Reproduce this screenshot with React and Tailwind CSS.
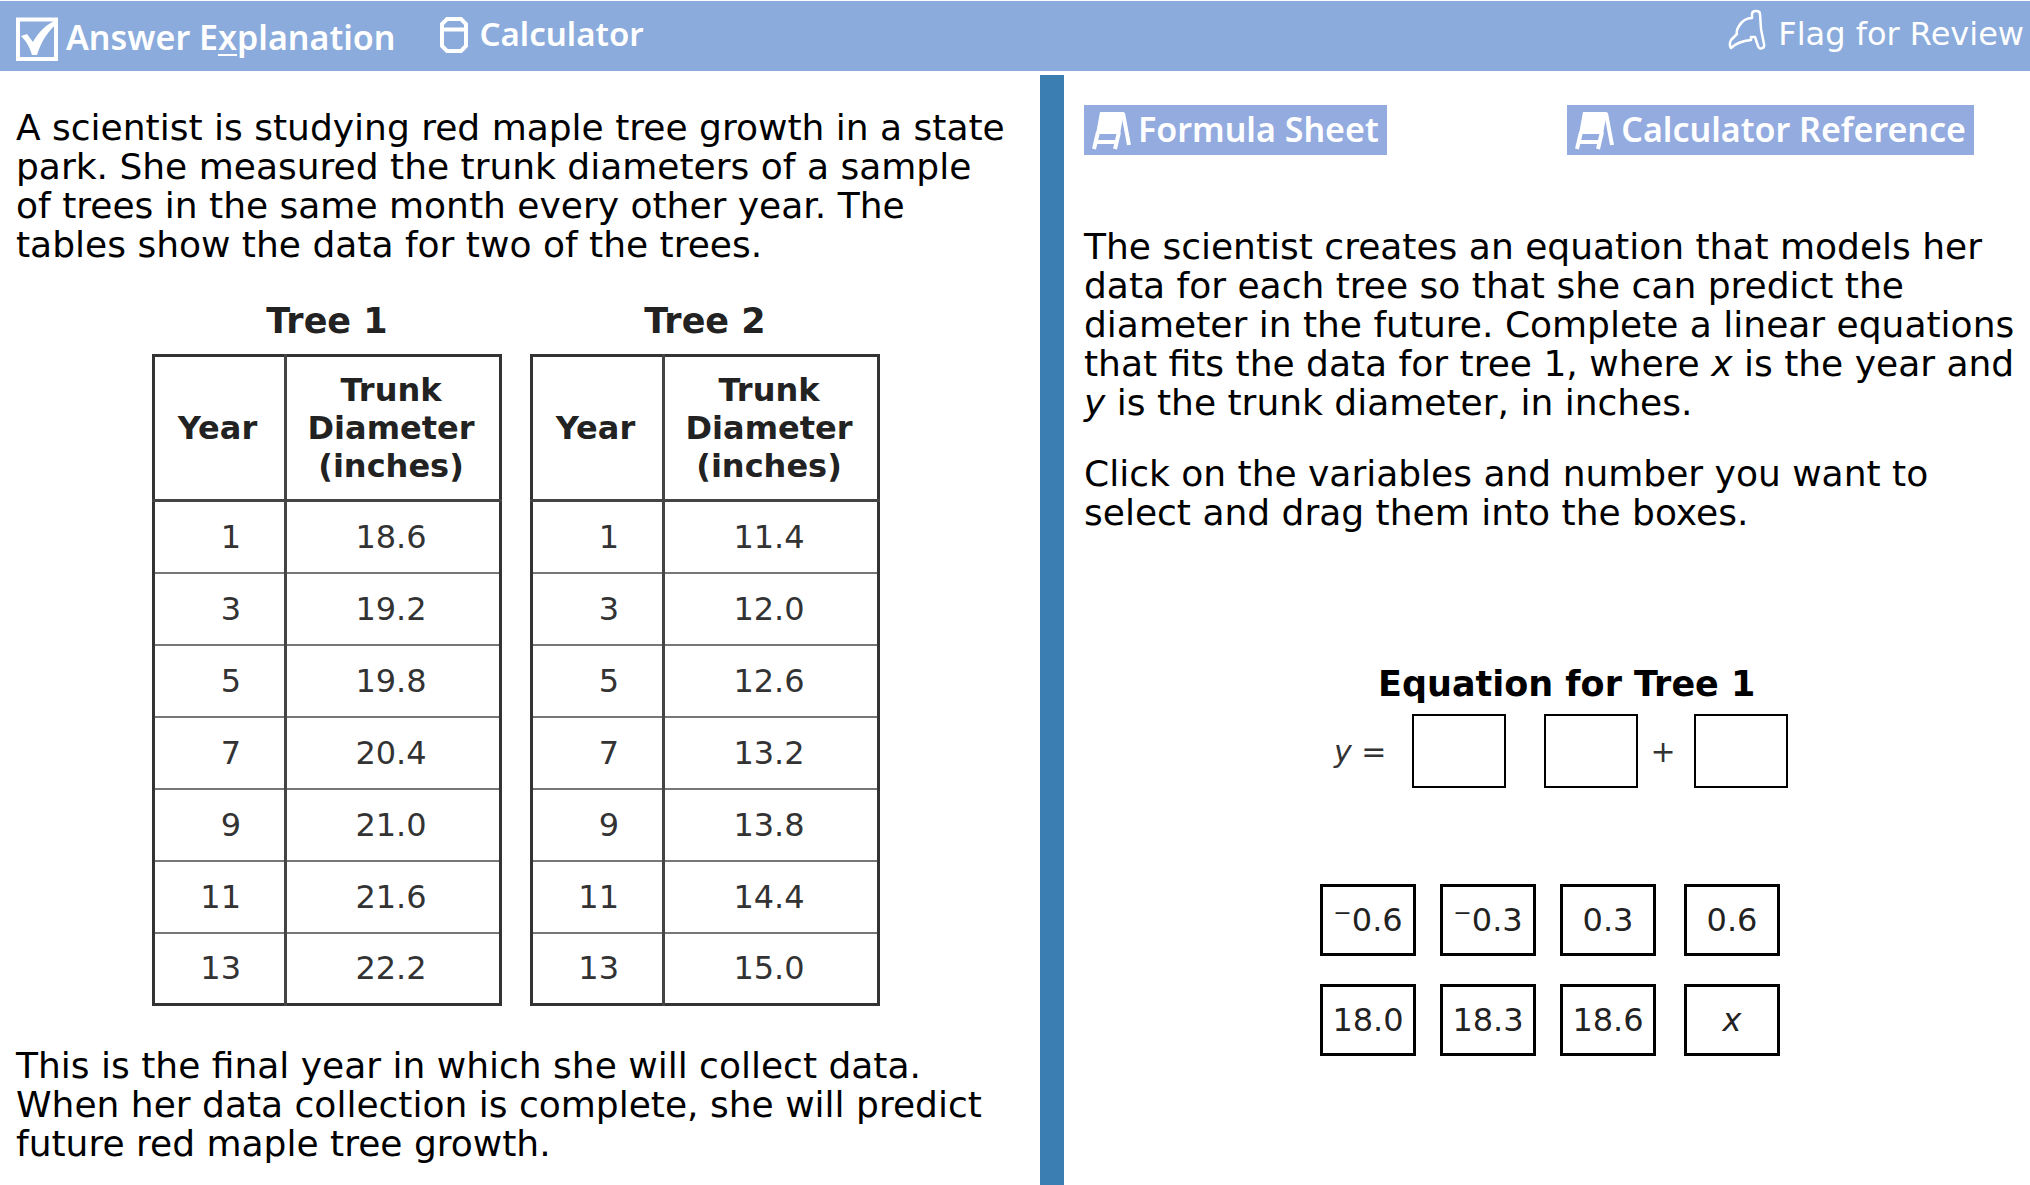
const tree1 = [
    [1, '18.6'],
    [3, '19.2'],
    [5, '19.8'],
    [7, '20.4'],
    [9, '21.0'],
    [11, '21.6'],
    [13, '22.2'],
];

const tree2 = [
    [1, '11.4'],
    [3, '12.0'],
    [5, '12.6'],
    [7, '13.2'],
    [9, '13.8'],
    [11, '14.4'],
    [13, '15.0'],
];

function CheckIcon() {
    return (
        <svg viewBox="0 0 42 44" className="h-11 w-[42px] shrink-0" fill="none" aria-hidden="true">
            <path d="M2 2.500H40V42H2Z" stroke="white" strokeWidth="4" />
            <path d="M5 19L11 17L17 25C23 14 31 7 42 2L43 5C34 12 26 22 21 38H16C14 31 11 25 5 19Z" fill="white" />
        </svg>
    );
}

function CalculatorIcon() {
    return (
        <svg viewBox="0 0 28 36" className="h-9 w-7 shrink-0" fill="none" stroke="white" strokeWidth="4" aria-hidden="true">
            <path d="M7 2H21L26 7V29L21 34H7L2 29V7Z" />
            <path d="M2 12.500H26" />
        </svg>
    );
}

function FlagIcon() {
    return (
        <svg viewBox="0 0 38 42" className="h-[42px] w-[38px] shrink-0" fill="none" stroke="white" strokeWidth="2.500" strokeLinejoin="round" aria-hidden="true">
            <path d="M24 9V5C24 1 32 1 32 5L33 20L36 35C37 40 31 41 30 37L27 28H23V31C14 32 8 34 3 39C1 36 2 33 3 31L9 25C8 22 9 20 11 17C14 12 19 9 24 9Z" />
        </svg>
    );
}

function BookIcon() {
    return (
        <svg viewBox="0 0 40 40" className="h-10 w-10 shrink-0" fill="none" stroke="white" aria-hidden="true">
            <path d="M8 2H32L28 24H4Z" fill="white" stroke="none" />
            <path d="M6 22L2 39M27 22L23 39M4 32H25" strokeWidth="4" />
            <path d="M31 3L37 35" strokeWidth="4" />
        </svg>
    );
}

function TreeTable({ title, rows }) {
    return (
        <table className="w-[350px] table-fixed border-collapse border-3 border-[#333] text-[32px] leading-[38px] text-[#333]">
            <caption className="pt-px pb-[14px] text-[35px] leading-[38px] font-bold text-[#222]">{title}</caption>
            <thead>
                <tr className="h-[145px] text-[32px] text-[#222]">
                    <th scope="col" className="w-[132px] border-r-3 border-b-3 border-[#444] pr-1">
                        Year
                    </th>
                    <th scope="col" className="border-b-3 border-[#444] pr-1">
                        Trunk
                        <br />
                        Diameter
                        <br />
                        (inches)
                    </th>
                </tr>
            </thead>
            <tbody>
                {rows.map(([year, diameter]) => (
                    <tr key={year} className="h-[72px] border-b-2 border-[#777] last:border-b-3 last:border-[#333]">
                        <td className="border-r-3 border-r-[#444] pr-[43px] text-right">{year}</td>
                        <td className="pr-1 text-center">{diameter}</td>
                    </tr>
                ))}
            </tbody>
        </table>
    );
}

function SheetButton({ children }) {
    return (
        <button
            type="button"
            className="flex h-[50px] items-center gap-[6px] bg-[#93abdf] px-2 font-['Noto_Sans',sans-serif] text-[34px] leading-[46px] font-semibold whitespace-nowrap text-white"
        >
            <BookIcon />
            <span className="pb-[2px]">{children}</span>
        </button>
    );
}

function DropBox({ label }) {
    return <button type="button" aria-label={label} className="h-[74px] w-[94px] shrink-0 border-2 border-black bg-white" />;
}

function Tile({ children }) {
    return (
        <button type="button" draggable="true" className="h-[72px] w-24 border-3 border-black bg-white text-[32px] whitespace-nowrap text-[#222]">
            {children}
        </button>
    );
}

function App() {
    return (
        <div className="flex min-h-screen flex-col bg-white pt-px font-['DejaVu_Sans',sans-serif] text-[36px] leading-[39px] text-black">
            {/* Toolbar */}
            <header className="flex h-[70px] items-start justify-between bg-[#8aabdc] pr-[6px] pl-4 text-white">
                <div className="flex items-start gap-11 pt-4 font-['Noto_Sans',sans-serif] font-semibold">
                    <button type="button" className="flex h-11 items-center gap-2 text-[34px]">
                        <CheckIcon />
                        <span className="pb-1">
                            Answer E<span className="underline decoration-2 underline-offset-4">x</span>planation
                        </span>
                    </button>
                    <button type="button" className="flex h-9 items-center gap-3 text-[33px]">
                        <CalculatorIcon />
                        <span className="pb-1">Calculator</span>
                    </button>
                </div>
                <button type="button" className="flex items-start gap-3 pt-2 text-[32px] leading-[50px]">
                    <FlagIcon />
                    Flag for Review
                </button>
            </header>

            <main className="mt-1 flex grow">
                {/* Left side - question data */}
                <section className="w-[1040px] shrink-0 pt-[33px] pl-4">
                    <p>
                        A scientist is studying red maple tree growth in a state
                        <br />
                        park. She measured the trunk diameters of a sample
                        <br />
                        of trees in the same month every other year. The
                        <br />
                        tables show the data for two of the trees.
                    </p>
                    <div className="mt-[37px] ml-[136px] flex gap-7">
                        <TreeTable title="Tree 1" rows={tree1} />
                        <TreeTable title="Tree 2" rows={tree2} />
                    </div>
                    <p className="mt-10">
                        This is the final year in which she will collect data.
                        <br />
                        When her data collection is complete, she will predict
                        <br />
                        future red maple tree growth.
                    </p>
                </section>

                <div className="w-6 shrink-0 bg-[#3b7eb1]" />

                {/* Right side - equation builder */}
                <section className="grow pt-[30px] pl-5">
                    <div className="flex justify-between pr-14">
                        <SheetButton>Formula Sheet</SheetButton>
                        <SheetButton>Calculator Reference</SheetButton>
                    </div>
                    <p className="mt-[72px] whitespace-nowrap">
                        The scientist creates an equation that models her
                        <br />
                        data for each tree so that she can predict the
                        <br />
                        diameter in the future. Complete a linear equations
                        <br />
                        that fits the data for tree 1, where <i>x</i> is the year and
                        <br />
                        <i>y</i> is the trunk diameter, in inches.
                    </p>
                    <p className="mt-8">
                        Click on the variables and number you want to
                        <br />
                        select and drag them into the boxes.
                    </p>

                    <div className="mt-[133px] ml-[236px] w-[468px]">
                        <h2 className="pl-[58px] text-[35px] font-bold whitespace-nowrap">Equation for Tree 1</h2>
                        <div className="mt-[10px] flex items-center pl-[14px] text-[30px] text-[#333]">
                            <span className="w-[78px] shrink-0 whitespace-nowrap">
                                <i>y</i> =
                            </span>
                            <DropBox label="First factor" />
                            <span className="w-[38px] shrink-0" />
                            <DropBox label="Second factor" />
                            <span className="w-14 shrink-0 pr-[6px] text-center">+</span>
                            <DropBox label="Constant" />
                        </div>
                        <div className="mt-24 grid grid-cols-[120px_120px_124px_96px] gap-y-7">
                            <Tile>
                                <sup className="text-[22px]">−</sup>0.6
                            </Tile>
                            <Tile>
                                <sup className="text-[22px]">−</sup>0.3
                            </Tile>
                            <Tile>0.3</Tile>
                            <Tile>0.6</Tile>
                            <Tile>18.0</Tile>
                            <Tile>18.3</Tile>
                            <Tile>18.6</Tile>
                            <Tile>
                                <i>x</i>
                            </Tile>
                        </div>
                    </div>
                </section>
            </main>
        </div>
    );
}

export default App;
